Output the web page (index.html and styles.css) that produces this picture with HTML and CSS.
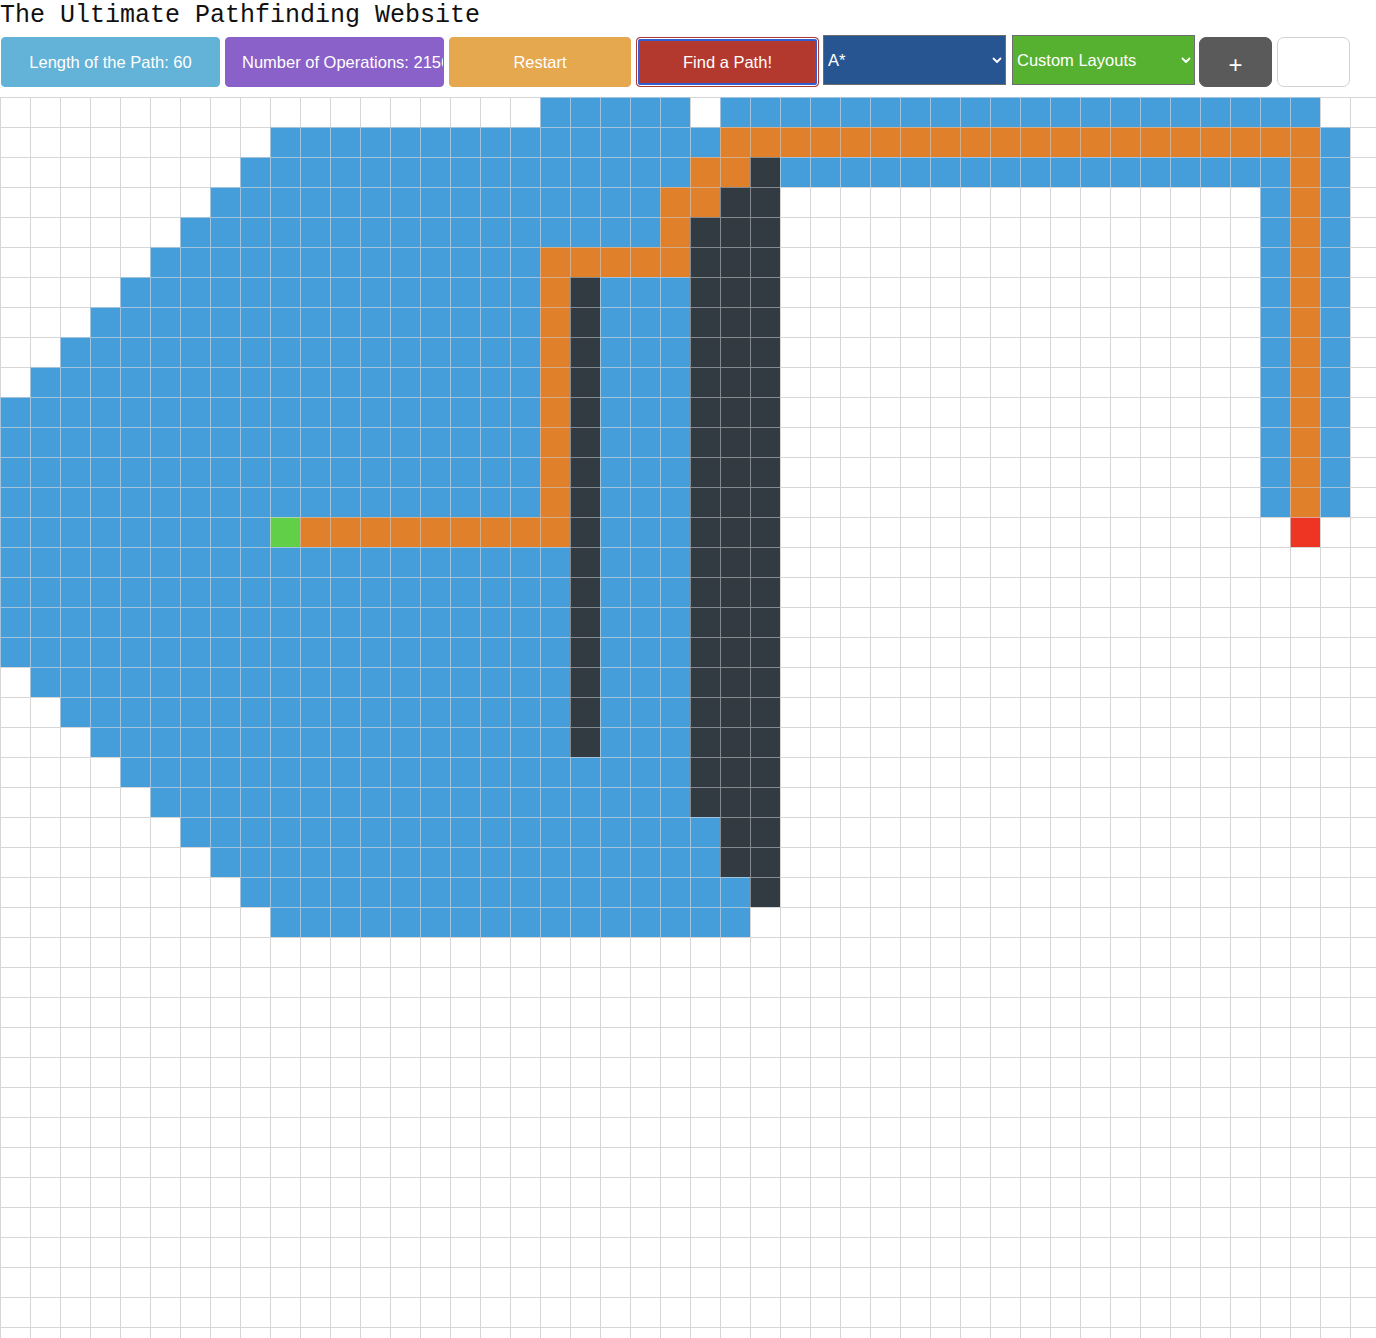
FILE: index.html
```html
<!DOCTYPE html>
<html lang="en">
<head>
<meta charset="utf-8">
<title>The Ultimate Pathfinding Website</title>
<link rel="stylesheet" href="styles.css">
</head>
<body>
<header class="topbar">
  <h1 class="title">The Ultimate Pathfinding Website</h1>
  <div class="controls">
    <button class="btn btn-info">Length of the Path: 60</button>
    <button class="btn btn-ops">Number of Operations: 2156</button>
    <button class="btn btn-restart">Restart</button>
    <button class="btn btn-find">Find a Path!</button>
    <div class="select-wrap select-algo">
      <select class="select">
        <option>A*</option>
        <option>Dijkstra</option>
        <option>BFS</option>
        <option>DFS</option>
      </select>
      <svg class="chev" width="10" height="7" viewBox="0 0 10 7"><path d="M1.5 1.5 L5 5 L8.5 1.5" fill="none" stroke="#fff" stroke-width="1.8" stroke-linecap="round" stroke-linejoin="round"/></svg>
    </div>
    <div class="select-wrap select-layout">
      <select class="select">
        <option>Custom Layouts</option>
      </select>
      <svg class="chev" width="10" height="7" viewBox="0 0 10 7"><path d="M1.5 1.5 L5 5 L8.5 1.5" fill="none" stroke="#fff" stroke-width="1.8" stroke-linecap="round" stroke-linejoin="round"/></svg>
    </div>
    <button class="btn btn-add">+</button>
    <button class="btn btn-blank"></button>
  </div>
</header>
<main class="board" id="board"></main>
<script src="main.js"></script>
</body>
</html>
```

FILE: styles.css
```css
html, body {
  margin: 0;
  padding: 0;
  overflow: hidden;
  background: #fff;
}

body {
  font-family: "Liberation Sans", Arial, sans-serif;
}

.title {
  box-sizing: border-box;
  margin: 0 0 5px 0;
  padding-top: 2px;
  height: 30px;
  font-family: "Liberation Mono", "Courier New", monospace;
  font-size: 25px;
  font-weight: normal;
  line-height: 28px;
  color: #111;
  white-space: nowrap;
}

.controls {
  display: flex;
  align-items: flex-start;
  height: 52px;
  padding-left: 1px;
}

.btn {
  box-sizing: border-box;
  display: flex;
  align-items: center;
  justify-content: center;
  height: 50px;
  margin: 2px 5px 0 0;
  padding: 0 17px;
  border: 1px solid transparent;
  border-radius: 4px;
  font-family: "Liberation Sans", Arial, sans-serif;
  font-size: 16.5px;
  color: #fff;
  white-space: nowrap;
  overflow: hidden;
}

.btn-info {
  width: 219px;
  background: #63b2d8;
  border-color: #63b2d8;
}

.btn-ops {
  width: 219px;
  justify-content: flex-start;
  padding: 0 0 0 16px;
  background: #8a60c9;
  border-color: #8a60c9;
}

.btn-restart {
  width: 182px;
  background: #e5a84f;
  border-color: #e5a84f;
}

.btn-find {
  width: 183px;
  margin-right: 4px;
  background: #b3382e;
  border-color: #b3382e;
  box-shadow: inset 0 0 0 1px #fff, inset 0 0 0 3px #2f5fd4;
}

.select-wrap {
  position: relative;
  width: 183px;
  height: 50px;
  margin-right: 5px;
}

.select-algo {
  margin-right: 6px;
}

.select-layout {
  margin-right: 4px;
}

.select {
  box-sizing: border-box;
  width: 100%;
  height: 50px;
  margin: 0;
  padding: 0 20px 0 4px;
  border: 1px solid #6e6e6e;
  border-radius: 0;
  appearance: none;
  -webkit-appearance: none;
  font-family: "Liberation Sans", Arial, sans-serif;
  font-size: 16.5px;
  color: #fff;
  outline: none;
}

.select-algo .select {
  background: #275592;
}

.select-layout .select {
  background: #56b130;
}

.chev {
  position: absolute;
  right: 4px;
  top: 22px;
  pointer-events: none;
}

.btn-add {
  width: 73px;
  padding: 5px 0 0 0;
  border-radius: 7px;
  background: #5a5a5a;
  border-color: #5a5a5a;
  font-size: 24px;
}

.btn-blank {
  width: 73px;
  border-radius: 7px;
  background: #fff;
  border-color: #d2d2d2;
}

.board {
  display: grid;
  grid-template-columns: repeat(46, 30px);
  grid-auto-rows: 30px;
  margin-top: 10px;
  width: 1380px;
}

.cell {
  box-sizing: border-box;
  border-left: 1px solid #d6d6d6;
  border-top: 1px solid #d6d6d6;
  background: #fff;
}

.cell-v {
  background: #459ed9;
  border-color: #a1c3de;
}

.cell-p {
  background: #e0802a;
  border-color: #d4ae8a;
}

.cell-w {
  background: #323a42;
  border-color: #858a90;
}

.cell-s {
  background: #62cf49;
  border-color: #b2d4ac;
}

.cell-t {
  background: #ee3422;
  border-color: #dda49e;
}
```

FILE: main.js
```js
(function () {
  var COLS = 46, ROWS = 42;
  var g = [];
  for (var r = 0; r < ROWS; r++) {
    var row = [];
    for (var c = 0; c < COLS; c++) row.push('');
    g.push(row);
  }
  function f(r, a, b, t) { for (var c = a; c <= b; c++) g[r][c] = t; }
  function right(r) { f(r, 42, 42, 'v'); f(r, 43, 43, 'p'); f(r, 44, 44, 'v'); }

  f(0, 18, 22, 'v'); f(0, 24, 43, 'v');
  f(1, 9, 23, 'v'); f(1, 24, 43, 'p'); f(1, 44, 44, 'v');
  f(2, 8, 22, 'v'); f(2, 23, 24, 'p'); f(2, 25, 25, 'w'); f(2, 26, 42, 'v'); f(2, 43, 43, 'p'); f(2, 44, 44, 'v');
  f(3, 7, 21, 'v'); f(3, 22, 23, 'p'); f(3, 24, 25, 'w'); right(3);
  f(4, 6, 21, 'v'); f(4, 22, 22, 'p'); f(4, 23, 25, 'w'); right(4);
  f(5, 5, 17, 'v'); f(5, 18, 22, 'p'); f(5, 23, 25, 'w'); right(5);
  var L1 = [4, 3, 2, 1, 0, 0, 0, 0];
  for (r = 6; r <= 13; r++) {
    f(r, L1[r - 6], 17, 'v'); f(r, 18, 18, 'p'); f(r, 19, 19, 'w');
    f(r, 20, 22, 'v'); f(r, 23, 25, 'w'); right(r);
  }
  f(14, 0, 8, 'v'); f(14, 9, 9, 's'); f(14, 10, 18, 'p'); f(14, 19, 19, 'w');
  f(14, 20, 22, 'v'); f(14, 23, 25, 'w'); f(14, 43, 43, 't');
  var L2 = [0, 0, 0, 0, 1, 2, 3];
  for (r = 15; r <= 21; r++) {
    f(r, L2[r - 15], 18, 'v'); f(r, 19, 19, 'w'); f(r, 20, 22, 'v'); f(r, 23, 25, 'w');
  }
  f(22, 4, 22, 'v'); f(22, 23, 25, 'w');
  f(23, 5, 22, 'v'); f(23, 23, 25, 'w');
  f(24, 6, 23, 'v'); f(24, 24, 25, 'w');
  f(25, 7, 23, 'v'); f(25, 24, 25, 'w');
  f(26, 8, 24, 'v'); f(26, 25, 25, 'w');
  f(27, 9, 24, 'v');

  var board = document.getElementById('board');
  var frag = document.createDocumentFragment();
  for (r = 0; r < ROWS; r++) {
    for (c = 0; c < COLS; c++) {
      var d = document.createElement('div');
      d.className = 'cell' + (g[r][c] ? ' cell-' + g[r][c] : '');
      frag.appendChild(d);
    }
  }
  board.appendChild(frag);
})();
```
